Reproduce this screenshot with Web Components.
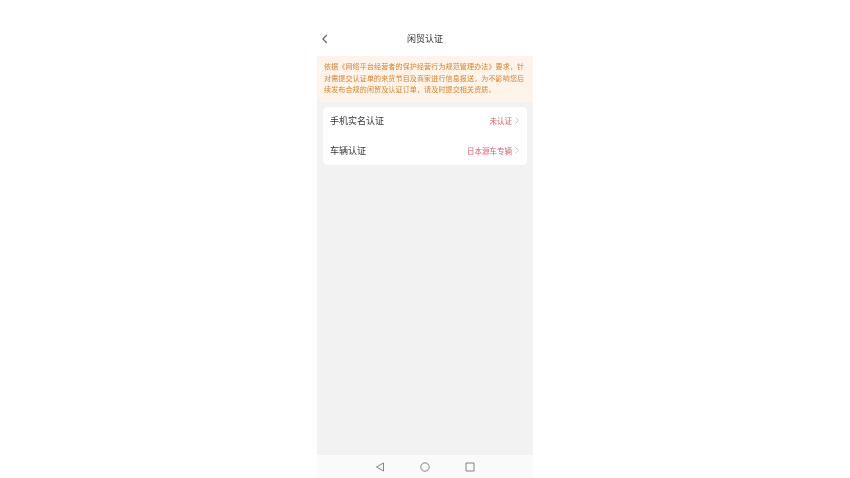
<!DOCTYPE html>
<html lang="zh">
<head>
<meta charset="utf-8">
<title>闲贸认证</title>
<style>
html, body { margin: 0; height: 100%; background: #fff; }
body { display: flex; justify-content: center; font-family: "Noto Sans CJK SC", "Liberation Sans", sans-serif; }
</style>
</head>
<body>
<phone-screen>
    <nav-header slot="header" title="闲贸认证"></nav-header>
    <notice-bar>依据《网络平台经营者的保护经营行为规范管理办法》要求，针对需提交认证单的来货节目及商家进行信息报送，为不影响您后续发布合规的闲贸及认证订单，请及时提交相关资质。</notice-bar>
    <list-card>
        <list-row label="手机实名认证" value="未认证"></list-row>
        <list-row label="车辆认证" value="日本源车专辆"></list-row>
    </list-card>
    <system-nav slot="footer"></system-nav>
</phone-screen>
<script>
class PhoneScreen extends HTMLElement {
    constructor() {
        super()
        this.attachShadow({ mode: "open" }).innerHTML = `
            <style>
                :host {
                    display: flex;
                    flex-direction: column;
                    width: 216px;
                    height: 478px;
                    background: #fff;
                    filter: blur(0.6px);
                }
                main {
                    flex: 1;
                    background: #f2f2f2;
                }
            </style>
            <slot name="header"></slot>
            <main><slot></slot></main>
            <slot name="footer"></slot>
        `
    }
}

class NavHeader extends HTMLElement {
    constructor() {
        super()
        this.attachShadow({ mode: "open" }).innerHTML = `
            <style>
                :host {
                    display: grid;
                    grid-template-columns: 20px 1fr 20px;
                    align-items: center;
                    height: 56px;
                    padding: 0 0 0 4px;
                    box-sizing: border-box;
                    background: #fff;
                    color: #333;
                }
                svg { width: 8px; height: 10px; margin-top: 21px; }
                span {
                    justify-self: center;
                    margin: 21px 0 0 -4px;
                    font-size: 9px;
                    line-height: 12px;
                }
            </style>
            <svg viewBox="0 0 8 10" fill="none" stroke="#666" stroke-width="1.2"><path d="M5.8 1 2 5l3.8 4"/></svg>
            <span>${this.getAttribute("title")}</span>
        `
    }
}

class NoticeBar extends HTMLElement {
    constructor() {
        super()
        this.attachShadow({ mode: "open" }).innerHTML = `
            <style>
                :host {
                    display: block;
                    height: 46px;
                    box-sizing: border-box;
                    padding: 5px 6px 0 7px;
                    background: #fff4ea;
                    color: #d9822f;
                    font-size: 7px;
                    letter-spacing: .15px;
                    line-height: 11.5px;
                }
            </style>
            <slot></slot>
        `
    }
}

class ListCard extends HTMLElement {
    constructor() {
        super()
        this.attachShadow({ mode: "open" }).innerHTML = `
            <style>
                :host {
                    display: block;
                    margin: 5px 6px 0;
                    border-radius: 5px;
                    background: #fff;
                }
            </style>
            <slot></slot>
        `
    }
}

class ListRow extends HTMLElement {
    constructor() {
        super()
        this.attachShadow({ mode: "open" }).innerHTML = `
            <style>
                :host {
                    display: flex;
                    align-items: center;
                    justify-content: space-between;
                    height: 29px;
                    padding: 0 8px 2px 7px;
                    box-sizing: border-box;
                    color: #333;
                    font-size: 9px;
                }
                :host(:last-child) { padding-bottom: 0; }
                .end {
                    display: flex;
                    align-items: center;
                    gap: 3px;
                    color: #df6068;
                    font-size: 7.5px;
                }
                svg { width: 4px; height: 7px; }
            </style>
            <span>${this.getAttribute("label")}</span>
            <span class="end">
                <span>${this.getAttribute("value")}</span>
                <svg viewBox="0 0 4 7" fill="none" stroke="#bbb" stroke-width=".8"><path d="m.5.5 3 3-3 3"/></svg>
            </span>
        `
    }
}

class SystemNav extends HTMLElement {
    constructor() {
        super()
        this.attachShadow({ mode: "open" }).innerHTML = `
            <style>
                :host {
                    display: flex;
                    align-items: center;
                    justify-content: center;
                    gap: 35px;
                    height: 23px;
                    background: #fafafa;
                }
                svg { width: 10px; height: 10px; }
            </style>
            <svg viewBox="0 0 10 10" fill="none" stroke="#777" stroke-width=".9"><path d="M8.5 1 1.5 5l7 4z"/></svg>
            <svg viewBox="0 0 10 10" fill="none" stroke="#777" stroke-width=".9"><circle cx="5" cy="5" r="4.2"/></svg>
            <svg viewBox="0 0 10 10" fill="none" stroke="#777" stroke-width=".9"><path d="M1 1h8v8H1z"/></svg>
        `
    }
}

customElements.define("phone-screen", PhoneScreen)
customElements.define("nav-header", NavHeader)
customElements.define("notice-bar", NoticeBar)
customElements.define("list-card", ListCard)
customElements.define("list-row", ListRow)
customElements.define("system-nav", SystemNav)
</script>
</body>
</html>
